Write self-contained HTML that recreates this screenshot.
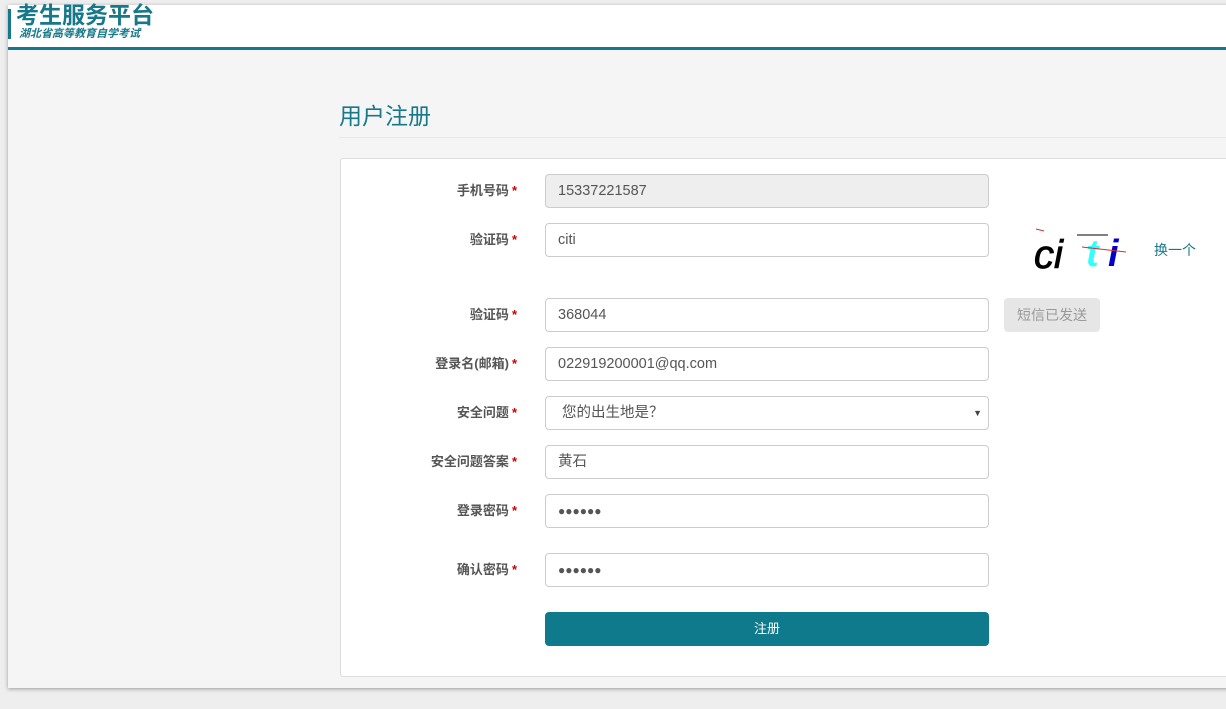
<!DOCTYPE html>
<html><head><meta charset="utf-8"><style>
*{box-sizing:border-box;margin:0;padding:0}
body{width:1226px;height:709px;background:#eeeeee;font-family:"Liberation Sans","Noto Sans CJK SC",sans-serif;position:relative;overflow:hidden}
.main{position:absolute;left:8px;top:5px;width:1230px;height:683px;background:#f5f5f5;box-shadow:0 1px 4px rgba(0,0,0,.35)}
.hdr{position:absolute;left:8px;top:5px;width:1230px;height:42px;background:#fff}
.bar{position:absolute;left:8px;top:47px;width:1230px;height:3px;background:#16788a}
.vbar{position:absolute;left:8px;top:9px;width:3px;height:30px;background:#16788a}
.t1{position:absolute;left:16px;top:1px;font-size:23px;font-weight:bold;color:#16788a;line-height:28px}
.t2{position:absolute;left:19px;top:28px;font-size:11px;font-weight:bold;color:#16788a;font-style:italic;line-height:13px}
.title{position:absolute;left:339px;top:101px;font-size:23px;color:#16788a;line-height:30px}
.hr{position:absolute;left:339px;top:137px;width:900px;height:1px;background:#e8e8e8}
.panel{position:absolute;left:340px;top:158px;width:900px;height:519px;background:#fff;border:1px solid #ddd;border-radius:3px}
.lbl{position:absolute;right:709px;font-size:13px;font-weight:bold;color:#555;line-height:34px;text-align:right}
.lbl b{color:#c00;margin-left:3px}
.in{position:absolute;left:545px;width:444px;height:34px;border:1px solid #ccc;border-radius:4px;background:#fff;padding-left:12px;font-size:14.5px;color:#555;line-height:32px}
.dis{background:#eee}
.btn{position:absolute;left:545px;top:612px;width:444px;height:34px;background:#107a8d;border-radius:4px;color:#fff;font-size:13px;text-align:center;line-height:34px}
.sms{position:absolute;left:1004px;top:298px;width:96px;height:34px;background:#e6e6e6;border-radius:4px;color:#999;font-size:14px;text-align:center;line-height:34px}
.chg{position:absolute;left:1154px;top:240px;font-size:14px;color:#16788a}
</style></head><body>
<div class="main"></div>
<div class="hdr"></div><div class="bar"></div><div class="vbar"></div>
<div class="t1">考生服务平台</div>
<div class="t2">湖北省高等教育自学考试</div>
<div class="title">用户注册</div>
<div class="hr"></div>
<div class="panel"></div>
<div class="lbl" style="top:174px">手机号码<b>*</b></div>
<div class="in dis" style="top:174px">15337221587</div>
<div class="lbl" style="top:223px">验证码<b>*</b></div>
<div class="in" style="top:223px">citi</div>
<svg style="position:absolute;left:1030px;top:225px" width="110" height="50">
<line x1="6" y1="4" x2="14" y2="6" stroke="#c33" stroke-width="1"/>
<text x="4" y="43" font-family="Liberation Sans" font-style="italic" font-size="40" fill="#000" stroke="#000" stroke-width="0.8">ci</text>
<text x="56" y="41" font-family="Liberation Sans" font-style="italic" font-weight="bold" font-size="38" fill="#3ff">t</text>
<text x="78" y="41" font-family="Liberation Sans" font-style="italic" font-weight="bold" font-size="38" fill="#00c">i</text>
<line x1="47" y1="10" x2="78" y2="10" stroke="#000" stroke-width="1"/>
<line x1="52" y1="22" x2="96" y2="27" stroke="#c33" stroke-width="1"/>
</svg>
<div class="chg">换一个</div>
<div class="lbl" style="top:298px">验证码<b>*</b></div>
<div class="in" style="top:298px">368044</div>
<div class="sms">短信已发送</div>
<div class="lbl" style="top:347px">登录名(邮箱)<b>*</b></div>
<div class="in" style="top:347px">022919200001@qq.com</div>
<div class="lbl" style="top:396px">安全问题<b>*</b></div>
<div class="in" style="top:396px;padding-left:16px">您的出生地是？<span style="position:absolute;right:6px;top:0;font-size:9px;color:#444">▼</span></div>
<div class="lbl" style="top:445px">安全问题答案<b>*</b></div>
<div class="in" style="top:445px">黄石</div>
<div class="lbl" style="top:494px">登录密码<b>*</b></div>
<div class="in" style="top:494px;font-size:12px">●●●●●●</div>
<div class="lbl" style="top:553px">确认密码<b>*</b></div>
<div class="in" style="top:553px;font-size:12px">●●●●●●</div>
<div class="btn">注册</div>
</body></html>
